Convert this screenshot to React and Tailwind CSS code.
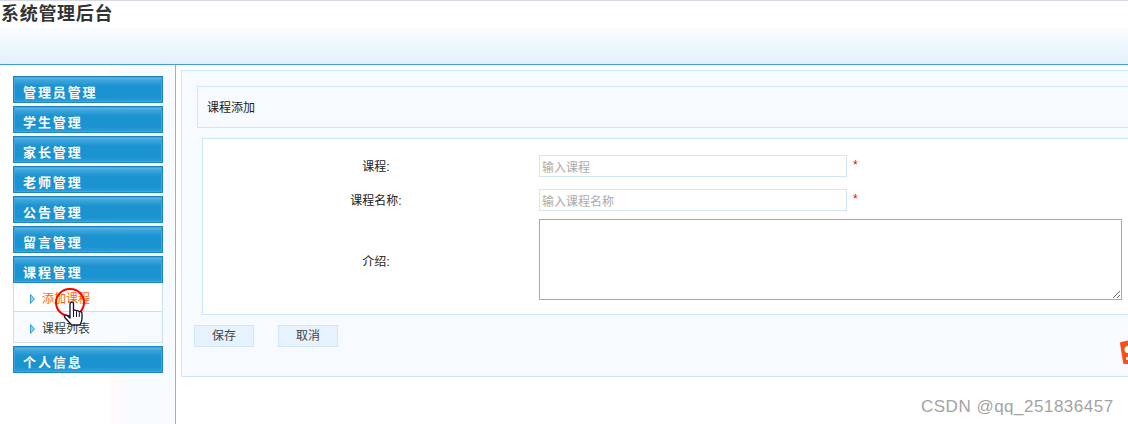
const FONT = "font-['Liberation_Sans','Noto_Sans_CJK_SC',sans-serif]";

const menus = ["管理员管理", "学生管理", "家长管理", "老师管理", "公告管理", "留言管理", "课程管理"];

function MenuHead({ label }) {
  return (
    <div className="h-[27px] border border-[#1a86c4] shadow-[inset_0_0_0_1px_#3fa6dc] bg-[linear-gradient(to_bottom,#6dbfe8_0px,#3fa6dc_3px,#1b93d0_9px,#1b93d0_20px,#2a9cd8_24px,#5fb4e4_26px)] pl-[9px] flex items-center">
      <span className="mt-[5px] text-[13px] font-bold tracking-[1.9px] text-white leading-none">{label}</span>
    </div>
  );
}

function Arrow() {
  return (
    <svg width="5" height="10" viewBox="0 0 5 10" className="shrink-0">
      <path d="M0.5 0.5 L4.5 5 L0.5 9.500 Z" fill="#8fd0f2" stroke="#3d9fd8" strokeWidth="1" />
    </svg>
  );
}

function Field({ label, placeholder, star }) {
  return (
    <div className="flex items-center">
      <div className="w-[312px] pt-[1px] text-center text-[12px] text-[#222]">{label}</div>
      <input
        placeholder={placeholder}
        readOnly
        className="ml-[7px] w-[308px] h-[22px] border border-[#cfe6fb] bg-white pl-[2px] pr-[3px] pt-[3px] text-[12px] text-[#333] placeholder:text-[#aaa] outline-none"
      />
      {star && <span className="ml-[6px] -mt-[2px] text-[12px] text-[#f00]">*</span>}
    </div>
  );
}

export default function App() {
  return (
    <div className={`${FONT} relative w-[1128px] h-[424px] overflow-hidden bg-white text-[12px]`}>
      <header className="h-[65px] border-t border-t-[#d6d8e6] border-b border-b-[#3f9ddb] flex flex-col">
        <div className="h-[27px] pl-[1px] pt-[1px] text-[18px] leading-[24px] font-bold tracking-[0.7px] text-[#333]">系统管理后台</div>
        <div className="flex-1 bg-[linear-gradient(to_bottom,#fafcff,#e3f1fc)]" />
      </header>

      <div className="flex h-[359px]">
        <aside className="w-[176px] shrink-0 border-r border-r-[#8db6d2] pl-[13px] pt-[11px] bg-[linear-gradient(to_right,#ffffff_108px,#fffafc_112px,#fffafc_120px,#f7faff_125px)]">
          <div className="w-[150px] flex flex-col gap-[3px]">
            {menus.slice(0, 6).map((m) => (
              <MenuHead key={m} label={m} />
            ))}
            <div>
              <MenuHead label={menus[6]} />
              <div className="border border-t-0 border-[#c9dfea]">
                <div className="h-[29px] bg-white border-b border-b-[#c9dfea] pl-[16px] pt-[3px] flex items-center gap-[7px]">
                  <Arrow />
                  <span className="text-[12px] text-[#ff6600]">添加课程</span>
                </div>
                <div className="h-[30px] bg-[#f7faff] pl-[16px] pt-[3px] flex items-center gap-[7px]">
                  <Arrow />
                  <span className="text-[12px] text-[#33402f]">课程列表</span>
                </div>
              </div>
            </div>
            <MenuHead label="个人信息" />
          </div>
        </aside>

        <main className="pl-[5px] pt-[5px]">
          <div className="w-[1000px] h-[307px] border border-[#cce6ff] bg-[#f7faff] pl-[15px] pt-[15px]">
            <div className="h-[42px] border border-[#cfe6fb] flex items-center pl-[9px] pt-[1px] text-[12px] text-[#222]">课程添加</div>
            <div className="mt-[10px] ml-[5px] h-[177px] border border-[#cce6ff] bg-white pl-[17px] pt-[16px] flex flex-col">
              <Field label="课程:" placeholder="输入课程" star />
              <div className="h-[12px]" />
              <Field label="课程名称:" placeholder="输入课程名称" star />
              <div className="h-[8px]" />
              <div className="flex items-center">
                <div className="w-[312px] pt-[5px] text-center text-[12px] text-[#222]">介绍:</div>
                <textarea readOnly className="ml-[7px] w-[583px] h-[81px] border border-[#aaa] bg-white outline-none" />
              </div>
            </div>
            <div className="mt-[10px] -ml-[3px] flex gap-[24px]">
              <button className="w-[60px] h-[22px] border border-[#cfe6fb] bg-[#e6f3fe] text-[12px] text-[#444]">保存</button>
              <button className="w-[60px] h-[22px] border border-[#cfe6fb] bg-[#e6f3fe] text-[12px] text-[#444]">取消</button>
            </div>
          </div>
        </main>
      </div>

      {/* recorded click highlight and pointer */}
      <div className="absolute left-[55px] top-[288px] w-[30px] h-[29px] rounded-full border-2 border-[#f00]" />
      <svg className="absolute left-[63px] top-[301px]" width="21" height="27" viewBox="0 0 21 27">
        <path
          d="M7 9.500V3c0-2.400 3.500-2.400 3.500 0v6.500c1-.8 2.500-.5 3 .5 1-.6 2.300-.2 2.700.8 1.200-.5 2.800.2 2.800 1.700v5c0 2.500-.8 4-2 6.500H8.500C6.500 21.500 4 19 1.800 16.500c-1-1.300.6-3 2.200-2l3 2.500z"
          fill="#fff"
          stroke="#0c1230"
          strokeWidth="1.300"
          strokeLinejoin="round"
        />
        <path d="M10.500 10v6M13.500 10.500v5.500M16.300 11.500v4.500" stroke="#0c1230" strokeWidth="1" />
      </svg>

      {/* cropped floating logo */}
      <svg className="absolute left-[1120px] top-[340px]" width="8" height="24" viewBox="0 0 8 24">
        <path d="M1 2 L8 0.500 V24 H4 Q3.500 24 3.200 23 L0 3.500 Q0 2.300 1 2 Z" fill="#f4511e" />
        <circle cx="8" cy="9.500" r="3.500" fill="#fff" />
        <rect x="6" y="17" width="2" height="3" fill="#fff" />
      </svg>

      <div className="absolute left-[921px] top-[397px] text-[17px] leading-[20px] tracking-[0.5px] text-[#a3a3a3] font-['Liberation_Sans',sans-serif]">
        CSDN @qq_251836457
      </div>
    </div>
  );
}
